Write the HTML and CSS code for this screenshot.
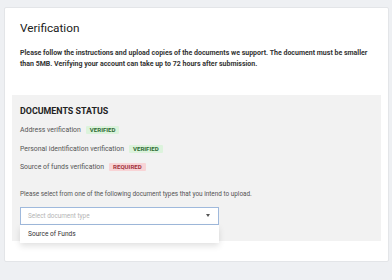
FILE: index.html
```html
<!DOCTYPE html>
<html lang="en">
<head>
    <meta charset="UTF-8">
    <meta name="viewport" content="width=device-width, initial-scale=1.0">
    <title>Verification</title>
    <link rel="stylesheet" href="styles.css">
</head>
<body>

    <div class="card">
        <h2 class="card-title">Verification</h2>
        <p class="intro">Please follow the instructions and upload copies of the documents we support. The document must be smaller than 5MB. Verifying your account can take up to 72 hours after submission.</p>

        <!-- Documents status -->
        <div class="status-box">
            <h3>DOCUMENTS STATUS</h3>
            <div class="status-row">Address verification <span class="badge verified">VERIFIED</span></div>
            <div class="status-row">Personal identification verification <span class="badge verified">VERIFIED</span></div>
            <div class="status-row">Source of funds verification <span class="badge required">REQUIRED</span></div>

            <p class="select-hint">Please select from one of the following document types that you intend to upload.</p>

            <div class="select-wrap">
                <div class="select">
                    <span class="placeholder">Select document type</span>
                    <span class="caret"></span>
                </div>
                <div class="menu">
                    <div class="menu-item">Source of Funds</div>
                </div>
            </div>
        </div>
    </div>

</body>
</html>
```

FILE: styles.css
```css
/* General Styling */
body {
    margin: 0;
    padding: 7px 3px 18px 4px;
    font-family: Roboto, 'Liberation Sans', sans-serif;
    background: #eef0f3;
}

.card {
    background: #ffffff;
    border: 1px solid #e3e5e8;
    border-radius: 2px;
    padding: 11px 7px 20px 7px;
}

.card-title {
    margin: 0 0 0 8px;
    font-size: 11.8px;
    font-weight: 400;
    color: #222;
    line-height: 18px;
}

.intro {
    margin: 11px 8px 25px 8px;
    font-size: 7px;
    line-height: 11px;
    font-weight: 700;
    color: #333;
}

/* Documents status */
.status-box {
    background: #f2f2f2;
    padding: 9px 8px 16px 8px;
}

.status-box h3 {
    margin: 0 0 3px 0;
    font-size: 8.9px;
    font-weight: 700;
    color: #222;
    line-height: 14px;
}

.status-row {
    font-size: 6.9px;
    color: #555;
    line-height: 18.5px;
    display: flex;
    align-items: center;
    gap: 5px;
}

.badge {
    font-size: 6.1px;
    font-weight: 700;
    padding: 0 4px;
    line-height: 8px;
    border-radius: 1px;
}

.badge.verified {
    background: #dcf3dc;
    color: #2e6b34;
}

.badge.required {
    background: #f8d4d6;
    color: #a2333d;
}

.select-hint {
    margin: 12px 0 8px 0;
    font-size: 6.4px;
    color: #555;
    line-height: 10px;
}

.select-wrap {
    position: relative;
    width: 199px;
}

.select {
    height: 16px;
    border: 1px solid #9fb9dc;
    background: #fff;
    display: flex;
    align-items: center;
    justify-content: space-between;
    padding: 0 8px 0 7px;
}

.placeholder {
    font-size: 6.4px;
    color: #b5b5b5;
}

.caret {
    width: 0;
    height: 0;
    border-left: 2.5px solid transparent;
    border-right: 2.5px solid transparent;
    border-top: 3px solid #555;
}

.menu {
    position: absolute;
    left: 0;
    right: 0;
    top: 18px;
    background: #fff;
    box-shadow: 0 3px 6px rgba(0,0,0,0.12);
    padding: 4px 8px;
}

.menu-item {
    font-size: 6.6px;
    color: #333;
    line-height: 10px;
}
```
